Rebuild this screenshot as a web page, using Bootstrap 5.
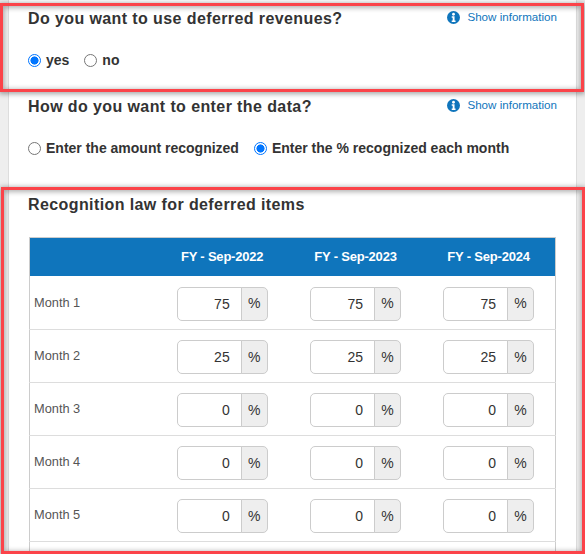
<!DOCTYPE html>
<html lang="en">
<head>
<meta charset="utf-8">
<title>Deferred revenues</title>
<link href="https://cdn.jsdelivr.net/npm/bootstrap@5.3.0/dist/css/bootstrap.min.css" rel="stylesheet">
<style>
html,body{height:554px;overflow:hidden}
body{background:#eee;font-family:"Liberation Sans",Arial,sans-serif;color:#333;font-size:14px;position:relative}
.panel-main{margin:0 8px;padding:0 21px 0 19px;background:#fff;height:554px;overflow:hidden;border-left:1px solid #ddd;border-right:1px solid #ddd}
.q-block{height:88px;padding-top:9px}
.q-block.last{height:auto;padding-top:19px}
.q-title{font-size:16px;font-weight:700;letter-spacing:.4px;color:#333;margin:0;line-height:20px}
.info-link{font-size:11.6px;color:#0f75bc;text-decoration:none;display:flex;align-items:center;gap:7px;margin-right:-2px;line-height:16px}
.info-link svg{width:13px;height:13px;flex:none}
.choices{margin-top:21px;gap:15px;height:20px}
.choice{display:flex;align-items:center;gap:5px;font-size:14px;font-weight:700;margin:0;color:#333}
.choice input{appearance:none;width:13px;height:13px;border-radius:50%;border:1px solid #767676;background:#fff;margin:0;flex:none}
.choice input:checked{border:1.5px solid #0075ff;background:radial-gradient(circle,#0075ff 0 3.8px,#fff 4.3px)}
.law-table{width:527px;margin:22px 0 0 1px;border:1px solid #ccc;border-collapse:collapse;table-layout:fixed}
.law-table th{background:#0f75bc;color:#fff;font-size:13px;letter-spacing:-.2px;font-weight:700;text-align:center;height:38px;padding:0;border:0}
.law-table td{height:53px;padding:10px 0 0;border-bottom:1px solid #ddd;vertical-align:top;background:#fff}
.law-table tbody tr:first-child td{height:54px;padding-top:11px}
.law-table td.mlabel{padding:16px 0 0 4px;color:#555;font-size:12.8px;line-height:20px}
.law-table tbody tr:first-child td.mlabel{padding-top:17px}
.law-table col.c-l{width:126px}
.law-table col.c-v{width:133.3px}
.pct{width:91px;height:34px;margin:0 auto;flex-wrap:nowrap}
.pct .form-control{width:65px;flex:none;height:34px;text-align:right;font-size:14px;color:#333;padding:0 11px 0 6px;border-color:#ccc;border-radius:5px 0 0 5px;font-family:inherit}
.pct .input-group-text{width:27px;height:34px;padding:0;justify-content:center;font-size:14px;color:#333;background:#eee;border-color:#ccc;border-radius:0 5px 5px 0}
.annot{position:absolute;border:3px solid #fb4349;box-shadow:0 1px 5px 1px rgba(0,0,0,.35),inset 0 1px 5px 1px rgba(0,0,0,.3);pointer-events:none}
.annot-a{left:0;top:3px;width:584px;height:89px}
.annot-b{left:1px;top:187px;width:584px;height:367px}
</style>
</head>
<body>
<main class="panel-main">
  <section class="q-block">
    <div class="d-flex justify-content-between align-items-start">
      <h2 class="q-title">Do you want to use deferred revenues?</h2>
      <a class="info-link" href="#"><svg viewBox="0 0 16 16"><circle cx="8" cy="8" r="8" fill="#0f75bc"/><circle cx="8" cy="4" r="1.7" fill="#fff"/><path d="M5.8 6.6h3.5v5.2h1.2v1.6H5.8v-1.6H7V8.2H5.8z" fill="#fff"/></svg>Show information</a>
    </div>
    <div class="d-flex choices">
      <label class="choice"><input type="radio" name="use" checked>yes</label>
      <label class="choice"><input type="radio" name="use">no</label>
    </div>
  </section>
  <section class="q-block">
    <div class="d-flex justify-content-between align-items-start">
      <h2 class="q-title">How do you want to enter the data?</h2>
      <a class="info-link" href="#"><svg viewBox="0 0 16 16"><circle cx="8" cy="8" r="8" fill="#0f75bc"/><circle cx="8" cy="4" r="1.7" fill="#fff"/><path d="M5.8 6.6h3.5v5.2h1.2v1.6H5.8v-1.6H7V8.2H5.8z" fill="#fff"/></svg>Show information</a>
    </div>
    <div class="d-flex choices">
      <label class="choice"><input type="radio" name="mode">Enter the amount recognized</label>
      <label class="choice"><input type="radio" name="mode" checked>Enter the % recognized each month</label>
    </div>
  </section>
  <section class="q-block last">
    <h2 class="q-title">Recognition law for deferred items</h2>
    <table class="law-table">
      <colgroup><col class="c-l"><col class="c-v"><col class="c-v"><col class="c-v"></colgroup>
      <thead><tr><th></th><th>FY - Sep-2022</th><th>FY - Sep-2023</th><th>FY - Sep-2024</th></tr></thead>
      <tbody>
        <tr><td class="mlabel">Month 1</td>
          <td><div class="input-group pct"><input class="form-control" value="75"><span class="input-group-text">%</span></div></td>
          <td><div class="input-group pct"><input class="form-control" value="75"><span class="input-group-text">%</span></div></td>
          <td><div class="input-group pct"><input class="form-control" value="75"><span class="input-group-text">%</span></div></td></tr>
        <tr><td class="mlabel">Month 2</td>
          <td><div class="input-group pct"><input class="form-control" value="25"><span class="input-group-text">%</span></div></td>
          <td><div class="input-group pct"><input class="form-control" value="25"><span class="input-group-text">%</span></div></td>
          <td><div class="input-group pct"><input class="form-control" value="25"><span class="input-group-text">%</span></div></td></tr>
        <tr><td class="mlabel">Month 3</td>
          <td><div class="input-group pct"><input class="form-control" value="0"><span class="input-group-text">%</span></div></td>
          <td><div class="input-group pct"><input class="form-control" value="0"><span class="input-group-text">%</span></div></td>
          <td><div class="input-group pct"><input class="form-control" value="0"><span class="input-group-text">%</span></div></td></tr>
        <tr><td class="mlabel">Month 4</td>
          <td><div class="input-group pct"><input class="form-control" value="0"><span class="input-group-text">%</span></div></td>
          <td><div class="input-group pct"><input class="form-control" value="0"><span class="input-group-text">%</span></div></td>
          <td><div class="input-group pct"><input class="form-control" value="0"><span class="input-group-text">%</span></div></td></tr>
        <tr><td class="mlabel">Month 5</td>
          <td><div class="input-group pct"><input class="form-control" value="0"><span class="input-group-text">%</span></div></td>
          <td><div class="input-group pct"><input class="form-control" value="0"><span class="input-group-text">%</span></div></td>
          <td><div class="input-group pct"><input class="form-control" value="0"><span class="input-group-text">%</span></div></td></tr>
        <tr><td class="mlabel"></td><td></td><td></td><td></td></tr>
      </tbody>
    </table>
  </section>
</main>
<div class="annot annot-a"></div>
<div class="annot annot-b"></div>
<script src="https://cdn.jsdelivr.net/npm/bootstrap@5.3.0/dist/js/bootstrap.bundle.min.js"></script>
</body>
</html>
